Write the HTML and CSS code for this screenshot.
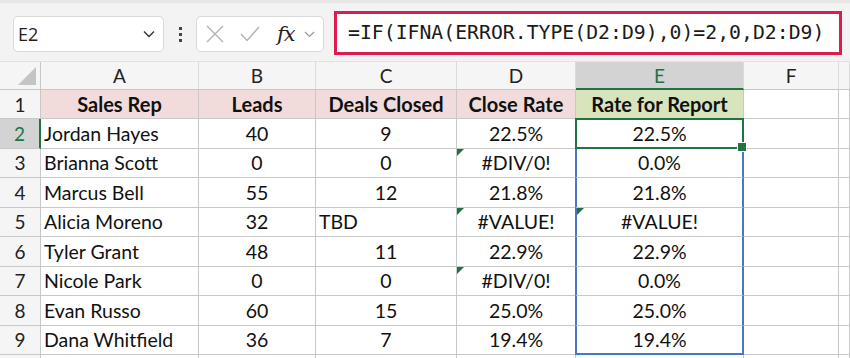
FILE: index.html
```html
<!DOCTYPE html>
<html lang="en">

<head>
    <meta charset="UTF-8">
    <title>Sales Rep Close Rate</title>
    <link rel="stylesheet" href="styles.css">
</head>

<body>

    <header class="bar">
        <div class="namebox">
            <span>E2</span>
            <svg class="chev" width="12" height="8" viewBox="0 0 12 8"><path d="M1 1.5 L6 6.5 L11 1.5" fill="none" stroke="#333" stroke-width="1.4"/></svg>
        </div>
        <div class="dots"><i></i><i></i><i></i></div>
        <div class="fxbox">
            <svg width="18" height="18" viewBox="0 0 18 18"><path d="M1 1 L17 17 M17 1 L1 17" stroke="#b3b3b3" stroke-width="1.4"/></svg>
            <svg width="20" height="16" viewBox="0 0 20 16"><path d="M1 8 L7 14.5 L19 1" fill="none" stroke="#b3b3b3" stroke-width="1.4"/></svg>
            <span class="fx">fx</span>
            <svg width="11" height="7" viewBox="0 0 11 7"><path d="M1 1 L5.5 5.5 L10 1" fill="none" stroke="#999" stroke-width="1.2"/></svg>
        </div>
        <div class="formula">=IF(IFNA(ERROR.TYPE(D2:D9),0)=2,0,D2:D9)</div>
    </header>

    <section id="sheet">
        <div class="corner"><span></span></div>
        <div class="ch">A</div>
        <div class="ch">B</div>
        <div class="ch">C</div>
        <div class="ch">D</div>
        <div class="ch aktiv">E</div>
        <div class="ch">F</div>
        <div class="ch"></div>
    </section>

    <script>
        const data = [
            ["Jordan Hayes", "40", "9", "22.5%", "22.5%"],
            ["Brianna Scott", "0", "0", "#DIV/0!", "0.0%"],
            ["Marcus Bell", "55", "12", "21.8%", "21.8%"],
            ["Alicia Moreno", "32", "TBD", "#VALUE!", "#VALUE!"],
            ["Tyler Grant", "48", "11", "22.9%", "22.9%"],
            ["Nicole Park", "0", "0", "#DIV/0!", "0.0%"],
            ["Evan Russo", "60", "15", "25.0%", "25.0%"],
            ["Dana Whitfield", "36", "7", "19.4%", "19.4%"]
        ];
        const heads = ["Sales Rep", "Leads", "Deals Closed", "Close Rate", "Rate for Report"];
        const sheet = document.querySelector("#sheet");

        function celle(klasse, tekst) {
            const div = document.createElement("div");
            div.className = klasse;
            div.textContent = tekst || "";
            sheet.appendChild(div);
            return div;
        }

        // række 1
        celle("rh", "1");
        heads.forEach((h, i) => celle(i == 4 ? "c head gron" : "c head", h));
        celle("c");
        celle("c");

        // data
        data.forEach((rad, r) => {
            celle(r == 0 ? "rh aktiv" : "rh", r + 2);
            rad.forEach((v, i) => {
                let k = "c";
                if (i == 0 || v == "TBD") k += " venstre";
                else k += " midt";
                if (i == 4) k += r == 0 ? " valgt" : " blaa";
                if (i == 4 && r == 7) k += " bund";
                const d = celle(k, v);
                if (v.startsWith("#")) d.classList.add("fejl");
                if (i == 4 && r == 0) d.appendChild(document.createElement("b"));
            });
            celle("c");
            celle("c");
        });

        // tom række nederst (kun gitterlinjer ses)
        celle("rh");
        for (let i = 0; i < 7; i++) celle("c");
    </script>
</body>

</html>
```

FILE: styles.css
```css
body {
    margin: 0;
    width: 850px;
    height: 358px;
    overflow: hidden;
    background-color: white;
    font-family: Lato, "Noto Sans", sans-serif;
}

.bar {
    height: 58px;
    background-color: #f3f3f3;
    border-top: 3px solid #e6e6e6;
    display: flex;
    align-items: center;
}

.namebox {
    margin-left: 13px;
    width: 151px;
    height: 36px;
    margin-top: 4px;
    background-color: white;
    border: 1px solid #dadada;
    border-radius: 5px;
    display: flex;
    align-items: center;
    justify-content: space-between;
    padding: 0 8px 0 4px;
    box-sizing: border-box;
    font-family: "Open Sans", sans-serif;
    font-size: 18px;
    color: #222;
}

.dots {
    width: 32px;
    display: flex;
    flex-direction: column;
    align-items: center;
    gap: 3px;
    margin-top: 4px;
}

.dots i {
    width: 3px;
    height: 3px;
    background-color: #444;
}

.fxbox {
    width: 128px;
    height: 36px;
    margin-top: 4px;
    background-color: white;
    border: 1px solid #dadada;
    border-radius: 5px;
    box-sizing: border-box;
    display: flex;
    align-items: center;
    padding-left: 9px;
    gap: 16px;
}

.fxbox .fx {
    font-family: "DejaVu Serif", serif;
    font-style: italic;
    font-size: 21px;
    color: #222;
    margin-left: 1px;
    margin-right: -7px;
    letter-spacing: -1px;
}

.formula {
    margin-left: 10px;
    width: 508px;
    height: 44px;
    box-sizing: border-box;
    border: 3px solid #dd1c4b;
    background-color: white;
    margin-top: 1px;
    padding-left: 11px;
    font-family: "DejaVu Sans Mono", monospace;
    font-size: 19.8px;
    line-height: 38px;
    color: #1a1a1a;
    white-space: nowrap;
}

#sheet {
    display: grid;
    grid-template-columns: 41px 158px 117px 141px 119px 168px 95px 1fr;
    grid-template-rows: 28px 29px repeat(8, 29.5px) 30px;
    border-top: 1px solid #e2e2e2;
    font-size: 19.5px;
    color: #111;
}

#sheet div {
    box-sizing: border-box;
    border-right: 1px solid #c8c8c8;
    border-bottom: 1px solid #c8c8c8;
    white-space: nowrap;
    position: relative;
}

.corner,
.ch,
.rh {
    background-color: #f5f5f5;
    display: flex;
    align-items: center;
    justify-content: center;
    color: #222;
    font-size: 19px;
}

#sheet .ch {
    border-right-color: #dcdcdc;
}

.corner span {
    position: absolute;
    right: 4px;
    bottom: 4px;
    width: 0;
    height: 0;
    border-left: 18px solid transparent;
    border-bottom: 18px solid #c4c4c4;
}

#sheet .ch.aktiv {
    background-color: #d3d3d3;
    color: #217346;
    border-bottom: 2px solid #217346;
}

#sheet .rh.aktiv {
    background-color: #d3d3d3;
    color: #217346;
    border-right: 2px solid #217346;
}

.c {
    display: flex;
    align-items: center;
    padding: 0 3px;
}

.midt {
    justify-content: center;
}

.head {
    background-color: #f2dcdb;
    justify-content: center;
    font-weight: bold;
    font-size: 20px;
}

.head.gron {
    background-color: #d8e4bc;
}

.fejl::before {
    content: "";
    position: absolute;
    left: 0;
    top: 0;
    border-top: 7px solid #1e7145;
    border-right: 7px solid transparent;
}

#sheet .valgt {
    border: 2px solid #217346;
    margin-left: -1px;
    margin-top: -1px;
}

.valgt b {
    position: absolute;
    right: -5px;
    bottom: -5px;
    width: 8px;
    height: 8px;
    background-color: #217346;
    border: 1px solid white;
    z-index: 2;
}

#sheet .blaa {
    border-left: 2px solid #4a77c4;
    border-right: 2px solid #4a77c4;
    margin-left: -1px;
}

#sheet .bund {
    border-bottom: 2px solid #4a77c4;
}
```
